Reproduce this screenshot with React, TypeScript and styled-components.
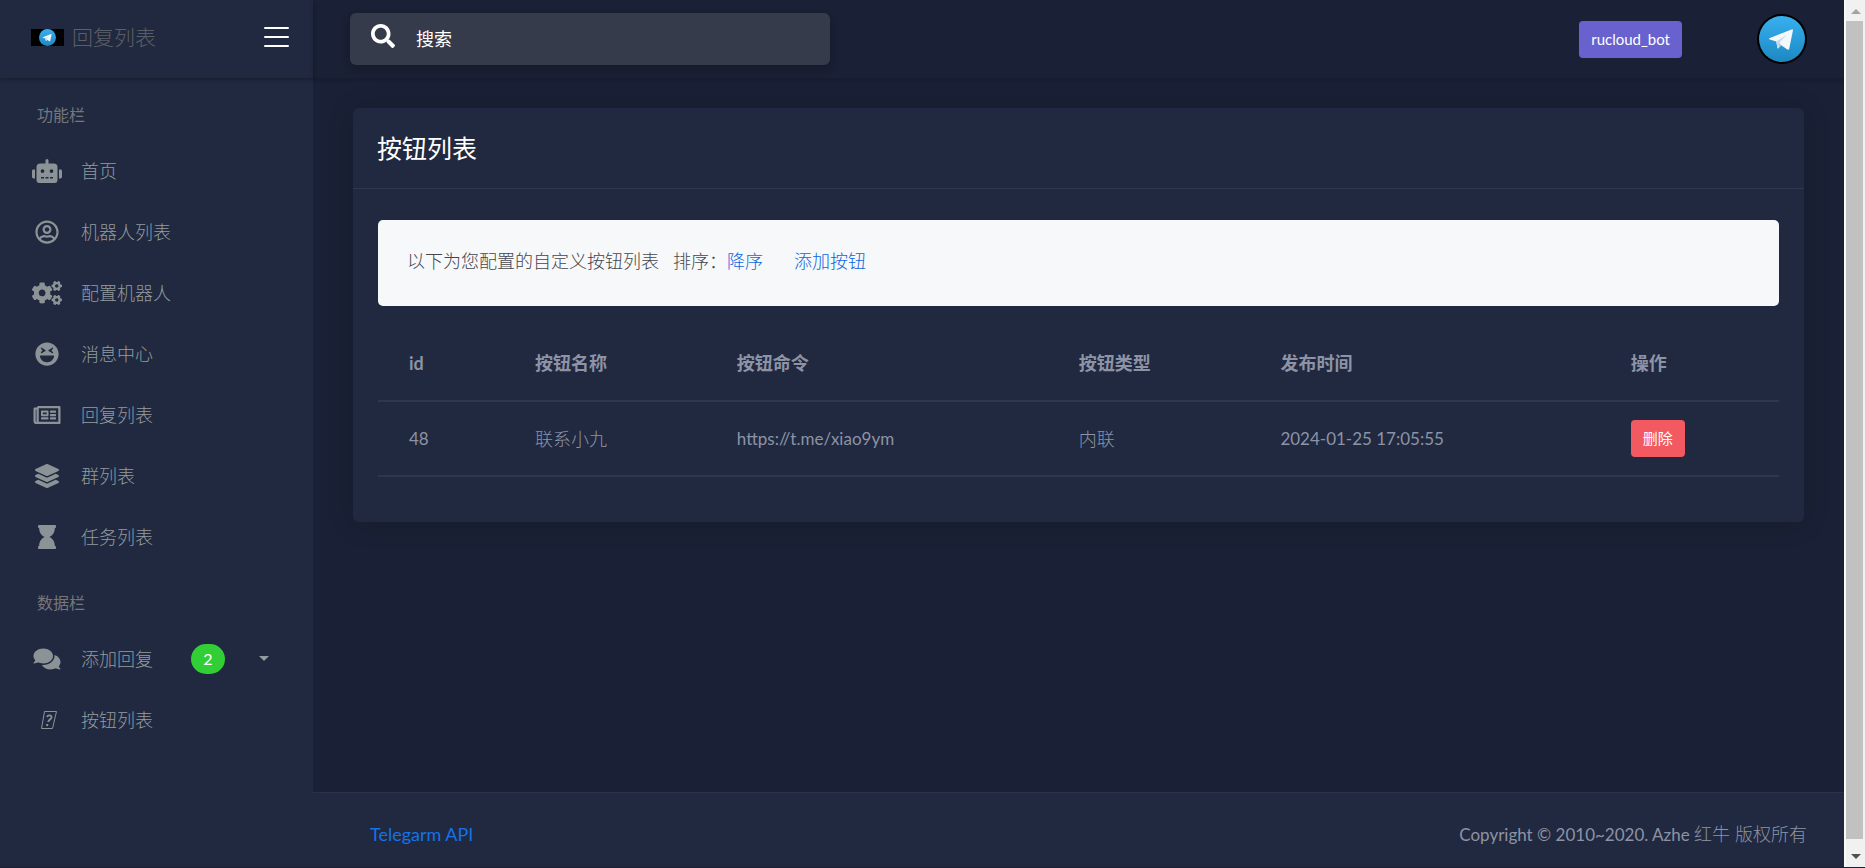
import React from 'react';
import styled, { createGlobalStyle } from 'styled-components';
import {
  FaCogs,
  FaComments,
  FaHourglass,
  FaLaughSquint,
  FaLayerGroup,
  FaRegNewspaper,
  FaRegUserCircle,
  FaRobot,
  FaSearch,
} from 'react-icons/fa';

const GlobalStyle = createGlobalStyle`
  *, *::before, *::after { box-sizing: border-box; }
  body {
    margin: 0;
    background: #1a2035;
    color: #8d93a5;
    font-family: Lato, "Noto Sans CJK SC", sans-serif;
    font-size: 18px;
    font-weight: 300;
    line-height: 28px;
  }
  a { text-decoration: none; }
`;

const Page = styled.div`
  display: grid;
  grid-template-columns: 313px minmax(0, 1fr) 21px;
  min-height: 100vh;
  padding-bottom: 1px;
`;

const Sidebar = styled.aside`
  background: #202940;
`;

const Brand = styled.header`
  display: flex;
  align-items: center;
  height: 78px;
  padding: 0 24px 0 31px;
  box-shadow: 0 2px 4px rgba(0, 0, 0, 0.25);
`;

const BrandLink = styled.a`
  display: flex;
  align-items: center;
  gap: 8px;
  padding-bottom: 4px;
  color: #5c5e66;
  font-size: 21px;
`;

const BrandLogo = styled.span`
  display: flex;
  justify-content: center;
  width: 33px;
  height: 17px;
  background: #000;
`;

const MenuToggle = styled.button`
  display: flex;
  flex-direction: column;
  justify-content: space-between;
  width: 25px;
  height: 20px;
  margin: 0 0 4px auto;
  padding: 0;
  border: 0;
  background: none;
`;

const ToggleBar = styled.span`
  height: 2px;
  border-radius: 1px;
  background: #fff;
`;

const Nav = styled.nav`
  padding-top: 21px;
`;

const NavHeading = styled.h2`
  margin: 0 0 9px;
  padding-left: 37px;
  color: #77777b;
  font-size: 16px;
  font-weight: 400;
  line-height: 32px;
`;

const NavList = styled.ul`
  margin: 0 0 20px;
  padding: 0;
  list-style: none;
`;

const NavLink = styled.a`
  display: flex;
  align-items: center;
  height: 61px;
  padding-left: 32px;
  color: #939b9e;
`;

const NavIcon = styled.span`
  display: flex;
  justify-content: center;
  width: 30px;
  margin-right: 19px;
  color: #8b9396;

  svg {
    width: 30px;
    height: 24px;
  }
`;

const Badge = styled.span`
  width: 34px;
  margin-left: 38px;
  border-radius: 15px;
  background: #31ce36;
  color: #fff;
  font-size: 16px;
  font-weight: 400;
  line-height: 30px;
  text-align: center;
`;

const Caret = styled.span`
  margin-left: 34px;
  border: 5px solid transparent;
  border-top-color: currentColor;
  border-bottom: 0;
`;

const Main = styled.div`
  display: flex;
  flex-direction: column;
`;

const Topbar = styled.header`
  display: flex;
  align-items: center;
  height: 78px;
  padding: 0 37px;
  box-shadow: 0 2px 4px rgba(0, 0, 0, 0.15);
`;

const SearchBox = styled.label`
  display: flex;
  align-items: center;
  flex: 0 1 480px;
  height: 52px;
  padding: 0 21px;
  border-radius: 6px;
  background: #363b4b;
  box-shadow: 0 4px 10px rgba(0, 0, 0, 0.2);
  color: #fff;

  svg {
    flex: none;
    margin: 0 21px 6px 0;
  }
`;

const SearchInput = styled.input`
  flex: 1;
  min-width: 0;
  padding: 0;
  border: 0;
  outline: 0;
  background: none;
  color: #fff;
  font: inherit;
  font-weight: 400;

  &::placeholder {
    color: #fff;
    opacity: 1;
  }
`;

const Account = styled.div`
  display: flex;
  align-items: center;
  gap: 75px;
  margin-left: auto;
`;

const SmallButton = styled.button<{ $color: string }>`
  display: block;
  height: 37px;
  padding: 0 12px;
  border: 0;
  border-radius: 4px;
  background: ${(p) => p.$color};
  color: #fff;
  font-family: inherit;
  font-size: 15px;
  font-weight: 400;
  line-height: 37px;
`;

const Avatar = styled.span`
  display: flex;
  align-items: center;
  justify-content: center;
  width: 50px;
  height: 50px;
  border-radius: 50%;
  background: #000;
`;

const Content = styled.main`
  flex: 1;
  padding: 30px 40px;
`;

const Card = styled.section`
  border-radius: 6px;
  background: #202940;
  box-shadow: 0 2px 30px rgba(0, 0, 0, 0.1);
`;

const CardHeader = styled.div`
  padding: 20px 24px;
  border-bottom: 1px solid #30374c;
`;

const CardTitle = styled.h1`
  margin: 0;
  color: #fff;
  font-size: 25px;
  font-weight: 400;
  line-height: 40px;
`;

const CardBody = styled.div`
  padding: 31px 25px 45px;
`;

const Notice = styled.div`
  display: flex;
  height: 86px;
  margin-bottom: 20px;
  padding: 27px 29px;
  border-radius: 5px;
  background: #f7f8fa;
  color: #44464e;
`;

const SortLabel = styled.span`
  margin-left: 14px;
`;

const Link = styled.a<{ $gap?: number }>`
  margin-left: ${(p) => p.$gap ?? 0}px;
  color: #0d66e0;
`;

const Table = styled.table`
  width: 100%;
  border-collapse: separate;
  border-spacing: 0;
  table-layout: fixed;
  text-align: left;
`;

const Column = styled.col<{ $share?: number }>`
  width: ${(p) => (p.$share ? `${p.$share}%` : 'auto')};
`;

const HeadCell = styled.th`
  height: 76px;
  padding: 0 31px;
  border-bottom: 2px solid #30374c;
  font-weight: 700;
`;

const Cell = styled.td<{ $latin?: boolean }>`
  height: 75px;
  padding: 0 31px;
  border-bottom: 2px solid #30374c;
  font-size: ${(p) => (p.$latin ? 17 : 18)}px;
  font-weight: ${(p) => (p.$latin ? 400 : 300)};
`;

const Footer = styled.footer`
  display: flex;
  align-items: center;
  justify-content: space-between;
  height: 75px;
  padding: 8px 37px 0 57px;
  border-top: 1px solid #2b3249;
  background: #202940;
`;

const ApiLink = styled.a`
  color: #1572e8;
  font-weight: 400;
`;

const Copyright = styled.span`
  font-size: 17px;
  font-weight: 400;
`;

const Owner = styled.span`
  font-size: 18px;
  font-weight: 300;
`;

const ScrollRail = styled.div`
  display: flex;
  flex-direction: column;
  align-items: center;
  border-left: 2px solid #fafafa;
  background: #f1f1f1;
`;

const ScrollArrow = styled.span<{ $down?: boolean }>`
  display: flex;
  align-items: center;
  justify-content: center;
  height: ${(p) => (p.$down ? 28 : 21)}px;
  padding-top: ${(p) => (p.$down ? 6 : 2)}px;

  &::before {
    content: '';
    border: 5px solid transparent;
    ${(p) =>
      p.$down
        ? 'border-top-color: #505050; border-bottom: 0;'
        : 'border-bottom-color: #a3a3a3; border-top: 0;'}
  }
`;

const ScrollThumb = styled.span`
  flex: 1;
  width: 17px;
  margin-right: 2px;
  background: #c1c1c1;
`;

function TelegramLogo({ size, id }: { size: number; id: string }) {
  return (
    <svg width={size} height={size} viewBox="0 0 240 240" aria-hidden="true">
      <defs>
        <linearGradient id={id} x1="0" y1="0" x2="0" y2="1">
          <stop offset="0" stopColor="#38b0ef" />
          <stop offset="1" stopColor="#1c88c2" />
        </linearGradient>
      </defs>
      <circle cx="120" cy="120" r="120" fill={`url(#${id})`} />
      <path
        d="M54 116 L170 70 Q178 67 177 76 L158 170 Q155 180 146 174 L116 152 L101 168 Q97 172 96 164 L90 133 L56 122 Q48 119 54 116 Z"
        fill="#f4f8fc"
      />
      <path d="M90 133 L148 96 L106 138 L100 168 Q97 170 96 164 Z" fill="#c8daea" />
      <path d="M106 138 L116 152 L101 168 Z" fill="#a9c9dd" />
    </svg>
  );
}

function UnknownGlyph() {
  return (
    <svg viewBox="0 0 20 24" fill="none" stroke="currentColor" aria-hidden="true">
      <path d="M7.500 3.500H19.500L15.500 20.500H4.500Z" />
      <path d="M10 9C11 6.500 15 7 14.500 9.500C14 11.500 11.500 11.500 11.200 14" strokeWidth="1.800" />
      <path d="M10.400 16L10 18" strokeWidth="2" />
    </svg>
  );
}

interface NavEntry {
  label: string;
  icon: React.ReactNode;
  badge?: number;
}

const featureItems: NavEntry[] = [
  { label: '首页', icon: <FaRobot /> },
  { label: '机器人列表', icon: <FaRegUserCircle /> },
  { label: '配置机器人', icon: <FaCogs /> },
  { label: '消息中心', icon: <FaLaughSquint /> },
  { label: '回复列表', icon: <FaRegNewspaper /> },
  { label: '群列表', icon: <FaLayerGroup /> },
  { label: '任务列表', icon: <FaHourglass /> },
];

const dataItems: NavEntry[] = [
  { label: '添加回复', icon: <FaComments />, badge: 2 },
  { label: '按钮列表', icon: <UnknownGlyph /> },
];

const columns = [
  { title: 'id', share: 9 },
  { title: '按钮名称', share: 14.4 },
  { title: '按钮命令', share: 24.4 },
  { title: '按钮类型', share: 14.4 },
  { title: '发布时间', share: 25 },
  { title: '操作' },
];

const rows = [
  { id: 48, name: '联系小九', command: 'https://t.me/xiao9ym', type: '内联', time: '2024-01-25 17:05:55' },
];

function NavSection({ title, items }: { title: string; items: NavEntry[] }) {
  return (
    <>
      <NavHeading>{title}</NavHeading>
      <NavList>
        {items.map((item) => (
          <li key={item.label}>
            <NavLink href="#">
              <NavIcon>{item.icon}</NavIcon>
              {item.label}
              {item.badge && (
                <>
                  <Badge>{item.badge}</Badge>
                  <Caret />
                </>
              )}
            </NavLink>
          </li>
        ))}
      </NavList>
    </>
  );
}

export default function App() {
  return (
    <>
      <GlobalStyle />
      <Page>
        <Sidebar>
          <Brand>
            <BrandLink href="#">
              <BrandLogo>
                <TelegramLogo size={17} id="brand-sky" />
              </BrandLogo>
              回复列表
            </BrandLink>
            <MenuToggle type="button" aria-label="菜单">
              <ToggleBar />
              <ToggleBar />
              <ToggleBar />
            </MenuToggle>
          </Brand>
          <Nav>
            <NavSection title="功能栏" items={featureItems} />
            <NavSection title="数据栏" items={dataItems} />
          </Nav>
        </Sidebar>

        <Main>
          <Topbar>
            <SearchBox>
              <FaSearch size={24} />
              <SearchInput type="text" placeholder="搜索" aria-label="搜索" />
            </SearchBox>
            <Account>
              <SmallButton type="button" $color="#6861ce">
                rucloud_bot
              </SmallButton>
              <Avatar>
                <TelegramLogo size={46} id="avatar-sky" />
              </Avatar>
            </Account>
          </Topbar>

          <Content>
            <Card>
              <CardHeader>
                <CardTitle>按钮列表</CardTitle>
              </CardHeader>
              <CardBody>
                <Notice>
                  <span>以下为您配置的自定义按钮列表</span>
                  <SortLabel>排序：</SortLabel>
                  <Link href="#">降序</Link>
                  <Link href="#" $gap={31}>
                    添加按钮
                  </Link>
                </Notice>
                <Table>
                  <colgroup>
                    {columns.map((c) => (
                      <Column key={c.title} $share={c.share} />
                    ))}
                  </colgroup>
                  <thead>
                    <tr>
                      {columns.map((c) => (
                        <HeadCell key={c.title} scope="col">
                          {c.title}
                        </HeadCell>
                      ))}
                    </tr>
                  </thead>
                  <tbody>
                    {rows.map((r) => (
                      <tr key={r.id}>
                        <Cell $latin>{r.id}</Cell>
                        <Cell>{r.name}</Cell>
                        <Cell $latin>{r.command}</Cell>
                        <Cell>{r.type}</Cell>
                        <Cell $latin>{r.time}</Cell>
                        <Cell>
                          <SmallButton type="button" $color="#f25961">
                            删除
                          </SmallButton>
                        </Cell>
                      </tr>
                    ))}
                  </tbody>
                </Table>
              </CardBody>
            </Card>
          </Content>

          <Footer>
            <ApiLink href="#">Telegarm API</ApiLink>
            <Copyright>
              Copyright © 2010~2020. Azhe <Owner>红牛 版权所有</Owner>
            </Copyright>
          </Footer>
        </Main>

        <ScrollRail aria-hidden="true">
          <ScrollArrow />
          <ScrollThumb />
          <ScrollArrow $down />
        </ScrollRail>
      </Page>
    </>
  );
}
